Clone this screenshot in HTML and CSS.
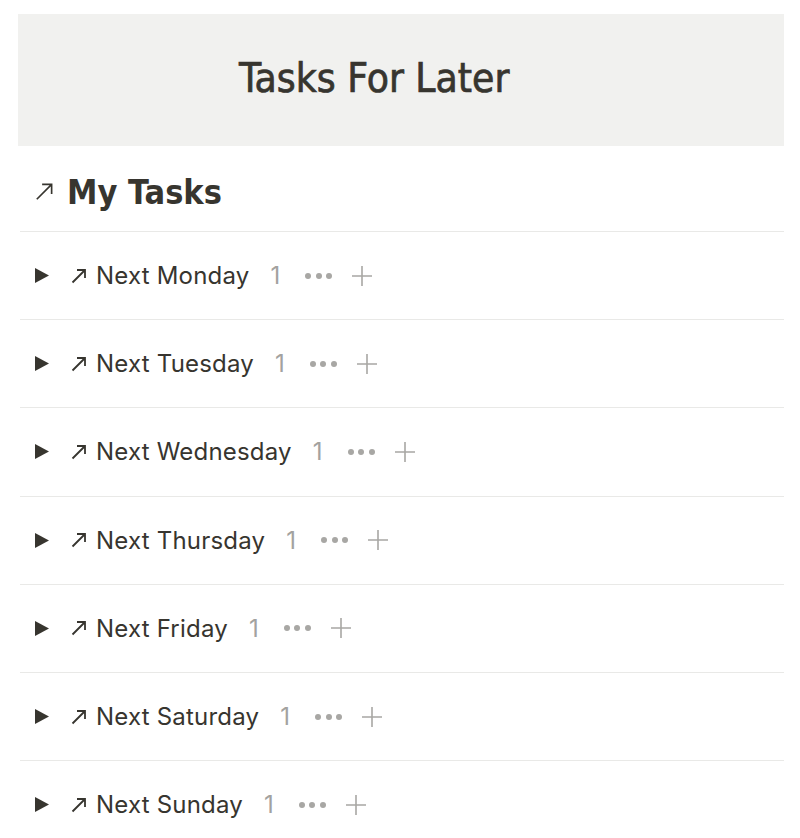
FILE: index.html
```html
<!DOCTYPE html>
<html>
<head>
<title>Tasks For Later</title>
<link rel="stylesheet" href="styles.css">
</head>
<body>

<div class="page">
  <div class="banner">
    <h1>Tasks For Later</h1>
  </div>

  <h2 class="list-title">
    <svg class="arrow big" viewBox="0 0 16 16"><path d="M1.5 14.5 L14 2 M6 2 H14 V10"/></svg>
    My Tasks
  </h2>

  <div class="groups">
    <div class="group">
      <svg class="caret" viewBox="0 0 14 15"><path d="M0 0 L14 7.5 L0 15 Z"/></svg>
      <svg class="arrow" viewBox="0 0 16 16"><path d="M1.5 14.5 L14 2 M6 2 H14 V10"/></svg>
      <span class="name">Next Monday</span>
      <span class="count">1</span>
      <span class="dots"><i></i><i></i><i></i></span>
      <svg class="plus" viewBox="0 0 22 22"><path d="M11 1 V21 M1 11 H21"/></svg>
    </div>
    <div class="group">
      <svg class="caret" viewBox="0 0 14 15"><path d="M0 0 L14 7.5 L0 15 Z"/></svg>
      <svg class="arrow" viewBox="0 0 16 16"><path d="M1.5 14.5 L14 2 M6 2 H14 V10"/></svg>
      <span class="name">Next Tuesday</span>
      <span class="count">1</span>
      <span class="dots"><i></i><i></i><i></i></span>
      <svg class="plus" viewBox="0 0 22 22"><path d="M11 1 V21 M1 11 H21"/></svg>
    </div>
    <div class="group">
      <svg class="caret" viewBox="0 0 14 15"><path d="M0 0 L14 7.5 L0 15 Z"/></svg>
      <svg class="arrow" viewBox="0 0 16 16"><path d="M1.5 14.5 L14 2 M6 2 H14 V10"/></svg>
      <span class="name">Next Wednesday</span>
      <span class="count">1</span>
      <span class="dots"><i></i><i></i><i></i></span>
      <svg class="plus" viewBox="0 0 22 22"><path d="M11 1 V21 M1 11 H21"/></svg>
    </div>
    <div class="group">
      <svg class="caret" viewBox="0 0 14 15"><path d="M0 0 L14 7.5 L0 15 Z"/></svg>
      <svg class="arrow" viewBox="0 0 16 16"><path d="M1.5 14.5 L14 2 M6 2 H14 V10"/></svg>
      <span class="name">Next Thursday</span>
      <span class="count">1</span>
      <span class="dots"><i></i><i></i><i></i></span>
      <svg class="plus" viewBox="0 0 22 22"><path d="M11 1 V21 M1 11 H21"/></svg>
    </div>
    <div class="group">
      <svg class="caret" viewBox="0 0 14 15"><path d="M0 0 L14 7.5 L0 15 Z"/></svg>
      <svg class="arrow" viewBox="0 0 16 16"><path d="M1.5 14.5 L14 2 M6 2 H14 V10"/></svg>
      <span class="name">Next Friday</span>
      <span class="count">1</span>
      <span class="dots"><i></i><i></i><i></i></span>
      <svg class="plus" viewBox="0 0 22 22"><path d="M11 1 V21 M1 11 H21"/></svg>
    </div>
    <div class="group">
      <svg class="caret" viewBox="0 0 14 15"><path d="M0 0 L14 7.5 L0 15 Z"/></svg>
      <svg class="arrow" viewBox="0 0 16 16"><path d="M1.5 14.5 L14 2 M6 2 H14 V10"/></svg>
      <span class="name">Next Saturday</span>
      <span class="count">1</span>
      <span class="dots"><i></i><i></i><i></i></span>
      <svg class="plus" viewBox="0 0 22 22"><path d="M11 1 V21 M1 11 H21"/></svg>
    </div>
    <div class="group">
      <svg class="caret" viewBox="0 0 14 15"><path d="M0 0 L14 7.5 L0 15 Z"/></svg>
      <svg class="arrow" viewBox="0 0 16 16"><path d="M1.5 14.5 L14 2 M6 2 H14 V10"/></svg>
      <span class="name">Next Sunday</span>
      <span class="count">1</span>
      <span class="dots"><i></i><i></i><i></i></span>
      <svg class="plus" viewBox="0 0 22 22"><path d="M11 1 V21 M1 11 H21"/></svg>
    </div>
  </div>
</div>

</body>
</html>
```

FILE: styles.css
```css
body {
  margin: 0;
  background: #fff;
  color: #37352f;
  font-family: Inter, "Noto Sans", sans-serif;
}
.page {
  padding: 14px 16px 0 18px;
}
.banner {
  background-color: #f1f1ef;
  height: 132px;
  display: flex;
  align-items: center;
  padding-left: 221px;
}
.banner h1 {
  margin: 0 0 4px;
  font-family: "DejaVu Sans Condensed", sans-serif;
  font-weight: 400;
  font-size: 40.4px;
  -webkit-text-stroke: 0.7px #37352f;
  color: #37352f;
}
.list-title {
  margin: 0 0 0 2px;
  height: 86px;
  display: flex;
  align-items: center;
  gap: 13px;
  padding: 6px 0 0 15px;
  box-sizing: border-box;
  font-family: "DejaVu Sans Condensed", sans-serif;
  font-weight: 700;
  font-size: 34px;
  border-bottom: 1px solid #e9e9e7;
}
.arrow {
  width: 16px;
  height: 16px;
  fill: none;
  stroke: #37352f;
  stroke-width: 1.8;
}
.arrow.big {
  width: 19px;
  height: 19px;
  stroke-width: 1.4;
}
.groups {
  margin-left: 2px;
}
.group {
  height: 87.2px; /* 88.2 with the border, as in the list */
  display: flex;
  align-items: center;
  border-bottom: 1px solid #e9e9e7;
  padding-left: 15px;
  font-size: 24px;
  letter-spacing: 0.2px;
}
.caret {
  width: 14px;
  height: 15px;
  fill: #37352f;
  margin-right: 22px;
}
.group .arrow {
  margin-right: 9px;
}
.name {
  color: #37352f;
}
.count {
  color: #a3a29f;
  margin-left: 21px;
}
.dots {
  display: flex;
  gap: 4.5px;
  margin-left: 25px;
}
.dots i {
  width: 6px;
  height: 6px;
  border-radius: 50%;
  background: #a8a7a4;
}
.plus {
  width: 22px;
  height: 22px;
  margin-left: 19px;
  fill: none;
  stroke: #a8a7a4;
  stroke-width: 1.6;
}
```
